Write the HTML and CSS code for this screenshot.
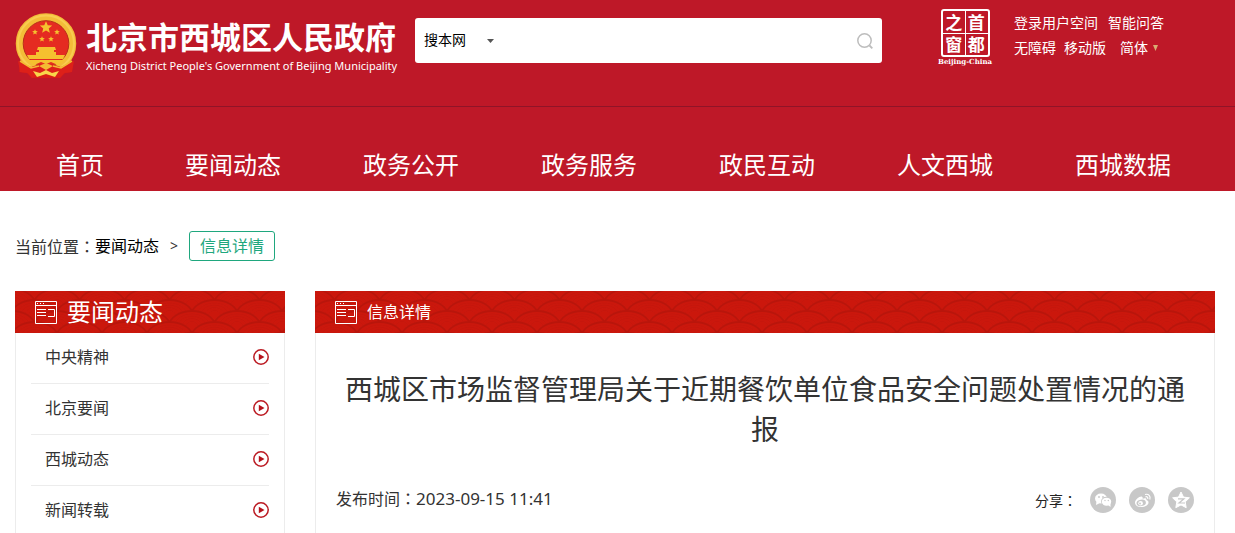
FILE: index.html
```html
<!DOCTYPE html>
<html lang="zh-CN">
<head>
<meta charset="utf-8">
<title>西城区市场监督管理局关于近期餐饮单位食品安全问题处置情况的通报</title>
<link rel="stylesheet" href="styles.css">
</head>
<body>
<svg class="defs" width="0" height="0" aria-hidden="true">
  <symbol id="play" viewBox="0 0 16 16"><circle cx="8" cy="8" r="7.2" fill="none" stroke="#bb1a22" stroke-width="1.5"/><path d="M5.8 4.7v6.6l5.7-3.3z" fill="#b5121b"/></symbol>
  <symbol id="panel" viewBox="0 0 22 23"><path d="M.5.5h21v22H.5zM.5 4.5h21M2 8.500h9M2 11.500h9M2 14.500h9M13 8.500h6.500v7H13" fill="none" stroke="#fff"/><path d="M2 2h1v1H2zM5 2h1v1H5zM8 2h1v1H8z" fill="#fff"/></symbol>
  <symbol id="star" viewBox="-10 -10 20 20"><path d="M0-9.500 2.700-3.300 9.500-2.900 4.200 1.500 6 8.200 0 4.600-6 8.200-4.200 1.500-9.500-2.900-2.700-3.300z"/></symbol>
</svg>
<header class="site-header">
  <div class="top">
    <a class="brand" href="#">
      <svg class="emblem" viewBox="0 0 62 66" aria-hidden="true">
        <path d="M7 45 4 59l8 1 5 5h28l5-5 7-1-3-14z" fill="#d81c17"/>
        <circle cx="31" cy="30.500" r="26.500" fill="#e52b21" stroke="#f3bd38" stroke-width="7.500"/>
        <circle cx="31" cy="30.500" r="28" fill="none" stroke="#f8cd50" stroke-width="2"/>
        <circle cx="31" cy="30.500" r="22.800" fill="none" stroke="#b92c19" stroke-width="1"/>
        <g fill="#f5c12f">
          <use href="#star" x="24.500" y="8" width="13" height="13"/>
          <use href="#star" x="17" y="16" width="6" height="6"/>
          <use href="#star" x="39" y="16" width="6" height="6"/>
          <use href="#star" x="24" y="23" width="6" height="6"/>
          <use href="#star" x="33" y="23" width="6" height="6"/>
          <path d="M23 34h17l1 3H22zM24 37h15v2H24zM21 39h20v3H21zM12 42h38l-2 4H14z"/>
          <path d="M12 47h38l-7 5-7-3-5 2-5-2-7 3z"/>
        </g>
        <path d="m3 48 13 6 9-3 6 3 6-3 9 3 13-6-2 11-8 1-4 5-8-3H25l-8 3-4-5-8-1z" fill="#dd2019"/>
        <path d="m18 58 7 2 6-3 6 3 7-2-4 6-9-3-9 3z" fill="#f8d64a"/>
        <path d="m24 53 7-3 7 3-7 4z" fill="#f4bb33"/>
        <path d="m5 48 11 7 8-2M57 48l-11 7-8-2" fill="none" stroke="#f4bb33" stroke-width="1.500"/>
      </svg>
      <span class="brand-text">
        <span class="brand-name">北京市西城区人民政府</span>
        <span class="brand-en">Xicheng District People's Government of Beijing Municipality</span>
      </span>
    </a>
    <form class="search" onsubmit="return false">
      <select class="scope" aria-label="搜索范围"><option>搜本网</option></select>
      <svg class="caret" viewBox="0 0 7 4" aria-hidden="true"><path d="M0 0h7L3.500 4z" fill="#555"/></svg>
      <input class="query" type="text" aria-label="搜索">
      <button class="search-btn" aria-label="搜索"><svg viewBox="0 0 16 16"><path d="M12.500 12.500 15.300 15.300" stroke="#bdbdbd" stroke-width="1.800"/><circle cx="7.500" cy="7.500" r="6.700" fill="none" stroke="#bdbdbd" stroke-width="1.500"/></svg></button>
    </form>
    <div class="tools">
      <a class="seal" href="#">
        <span class="seal-box"><span>之</span><span>首</span><span>窗</span><span>都</span></span>
        <span class="seal-en">Beijing-China</span>
      </a>
      <div class="links">
        <div class="links-row user"><a href="#">登录用户空间</a><a href="#">智能问答</a></div>
        <div class="links-row"><a href="#">无障碍</a><a href="#">移动版</a><a class="lang" href="#">简体<svg viewBox="0 0 5 6" aria-hidden="true"><path d="M0 0h5L2.500 6z" fill="#d9ad72"/></svg></a></div>
      </div>
    </div>
  </div>
  <nav class="nav">
    <a href="#">首页</a><a href="#">要闻动态</a><a href="#">政务公开</a><a href="#">政务服务</a><a href="#">政民互动</a><a href="#">人文西城</a><a href="#">西城数据</a>
  </nav>
</header>
<div class="crumbs">
  <span>当前位置<span class="colon" lang="zh-TW">：</span></span><a href="#">要闻动态</a><span class="sep">&gt;</span><a class="current" href="#">信息详情</a>
</div>
<div class="layout">
  <aside class="side">
    <h2 class="bar bar-large"><svg aria-hidden="true"><use href="#panel"/></svg>要闻动态</h2>
    <ul class="menu">
      <li><a href="#">中央精神<svg aria-hidden="true"><use href="#play"/></svg></a></li>
      <li><a href="#">北京要闻<svg aria-hidden="true"><use href="#play"/></svg></a></li>
      <li><a href="#">西城动态<svg aria-hidden="true"><use href="#play"/></svg></a></li>
      <li><a href="#">新闻转载<svg aria-hidden="true"><use href="#play"/></svg></a></li>
    </ul>
  </aside>
  <main class="content">
    <h2 class="bar"><svg aria-hidden="true"><use href="#panel"/></svg>信息详情</h2>
    <article class="article">
      <h1>西城区市场监督管理局关于近期餐饮单位食品安全问题处置情况的通报</h1>
      <div class="meta">
        <span class="date">发布时间<span class="colon" lang="zh-TW">：</span><time datetime="2023-09-15T11:41">2023-09-15 11:41</time></span>
        <div class="share">
          <span>分享<span class="colon" lang="zh-TW">：</span></span>
          <a href="#" aria-label="微信"><svg viewBox="0 0 26 26"><circle cx="13" cy="13" r="13" fill="#c8c8c8"/><g fill="#fff"><ellipse cx="11" cy="11.500" rx="6" ry="5"/><path d="m6.500 14-.5 4 4-2z"/></g><ellipse cx="16.500" cy="14.500" rx="5.400" ry="4.800" fill="#c8c8c8"/><ellipse cx="16.500" cy="14.700" rx="4.700" ry="4" fill="#fff"/><path d="m18 18 2.500 2v-4z" fill="#fff"/><g fill="#c8c8c8"><circle cx="9" cy="10" r=".9"/><circle cx="13" cy="10" r=".9"/><circle cx="15" cy="13.500" r=".7"/><circle cx="18.300" cy="13.500" r=".7"/></g></svg></a>
          <a href="#" aria-label="微博"><svg viewBox="0 0 26 26"><circle cx="13" cy="13" r="13" fill="#c8c8c8"/><path d="M6 15.500c0-3 5-6.800 7-5.800 1 .5.700 1.600.6 2 1.800-.7 4-.8 3.900 1.200 1.200.4 2 1.200 2 2.500 0 2.500-3.400 4.700-7 4.700S6 18.500 6 15.500z" fill="#fff"/><ellipse cx="12.200" cy="15.900" rx="4.700" ry="3.200" fill="#c8c8c8" transform="rotate(-8 12.200 15.900)"/><circle cx="11.600" cy="16.200" r="2.300" fill="#fff"/><circle cx="11" cy="16.500" r=".9" fill="#c8c8c8"/><path d="M16 7.500c3.500-1 6 1.800 4.800 5M16.500 9.800c1.700-.4 2.700.6 2.200 2.200" fill="none" stroke="#fff" stroke-width="1.200"/></svg></a>
          <a href="#" aria-label="QQ空间"><svg viewBox="0 0 26 26"><circle cx="13" cy="13" r="13" fill="#c8c8c8"/><path d="m13 5 2.500 5.100 5.900.7-4.200 4.100 1 5.800-5.200-2.800-5.200 2.800 1-5.800-4.200-4.100 5.900-.7z" fill="#fff" stroke="#fff" stroke-linejoin="round"/><path d="M10 11.800h6l-5 4.200h6" fill="none" stroke="#c8c8c8" stroke-width="1.200"/></svg></a>
        </div>
      </div>
    </article>
  </main>
</div>
</body>
</html>
```
FILE: styles.css
```css
* { box-sizing: border-box; }
body {
  margin: 0;
  background: #fff;
  color: #333;
  font: 16px/24px "Noto Sans", "Noto Sans CJK SC", sans-serif;
}
a { color: inherit; text-decoration: none; }
h1, h2, ul { margin: 0; padding: 0; font-weight: 400; list-style: none; }
svg { display: block; flex: none; }
.defs { position: absolute; }
.colon { font-family: "Noto Sans CJK TC", sans-serif; }

.site-header { background: #be1828; color: #fff; }
.top {
  display: flex;
  align-items: flex-start;
  height: 107px;
  padding: 0 15px;
  border-bottom: 1px solid #8f1428;
}
.brand { display: flex; gap: 9px; width: 400px; padding-top: 13px; }
.emblem { width: 62px; height: 66px; }
.brand-text { display: flex; flex-direction: column; padding-top: 3px; white-space: nowrap; }
.brand-name { font: 700 31px/40px "Noto Sans CJK SC", sans-serif; }
.brand-en { font-size: 11px; line-height: 20px; }

.search {
  display: flex;
  flex: 1;
  align-items: center;
  min-width: 200px;
  height: 45px;
  margin-top: 18px;
  padding: 0 9px;
  border-radius: 3px;
  background: #fff;
}
.scope {
  width: 63px;
  height: 28px;
  padding: 0 0 4px;
  border: 0;
  appearance: none;
  background: none;
  color: #000;
  font: 14px/24px "Noto Sans CJK SC", sans-serif;
}
.caret { width: 7px; height: 4px; }
.query { flex: 1; min-width: 0; height: 40px; border: 0; outline: 0; background: none; font: inherit; }
.search-btn { padding: 0; border: 0; background: none; }
.search-btn svg { width: 16px; height: 16px; }

.tools { display: flex; gap: 21px; width: 338px; padding: 9px 0 0 55px; font-size: 14px; }
.seal { display: flex; flex-direction: column; align-items: center; width: 56px; }
.seal-box {
  display: grid;
  grid-template-columns: 1fr 1fr;
  width: 49px;
  height: 48px;
  border: 2px solid #fff;
  border-radius: 3px;
  background:
    linear-gradient(#fff, #fff) center / 1px 100% no-repeat,
    linear-gradient(#fff, #fff) center / 100% 1px no-repeat;
  font: 700 17px/22px "Noto Sans CJK SC", sans-serif;
  text-align: center;
}
.seal-en { font: 700 7px/10px "DejaVu Serif", serif; white-space: nowrap; }
.links { padding-top: 1px; white-space: nowrap; }
.links-row { display: flex; gap: 8px; line-height: 25px; }
.user { gap: 10px; }
.lang { display: flex; align-items: center; gap: 5px; padding-left: 6px; }
.lang svg { width: 5px; height: 6px; }

.nav {
  display: grid;
  grid-template-columns: 128fr repeat(6, 178fr);
  padding: 40px 23px 8px 16px;
  font-size: 24px;
  line-height: 36px;
  text-align: center;
}

.crumbs { display: flex; align-items: center; padding: 40px 15px 30px; }
.crumbs a { color: #000; }
.sep { padding: 0 11px; font-size: 14px; }
.crumbs .current {
  padding: 2px 10px;
  border: 1px solid #1fa77e;
  border-radius: 3px;
  color: #1fa77e;
}

.layout { display: flex; gap: 30px; padding: 0 20px 0 15px; }
.side { width: 270px; flex: none; }
.content { display: flex; flex: 1; flex-direction: column; min-width: 0; }
.bar {
  display: flex;
  align-items: center;
  gap: 10px;
  height: 42px;
  padding: 0 20px;
  color: #fff;
  font-size: 16px;
  background: #cb170c url("data:image/svg+xml,%3Csvg xmlns='http://www.w3.org/2000/svg' xmlns:xlink='http://www.w3.org/1999/xlink' width='45' height='22'%3E%3Cdefs%3E%3Cg id='s' fill='%23cb170c' stroke='%23c3160c'%3E%3Cpath d='M-24 16C-19-4 19-4 24 16' stroke='%23b9150b' stroke-width='2'/%3E%3Cpath d='M-18 16C-15 0 15 0 18 16M-14 16C-12 3 12 3 14 16M-10 16C-8 6 8 6 10 16M-6 16C-5 10 5 10 6 16' stroke-width='.7'/%3E%3C/g%3E%3C/defs%3E%3Cuse xlink:href='%23s' x='0' y='-11'/%3E%3Cuse xlink:href='%23s' x='45' y='-11'/%3E%3Cuse xlink:href='%23s' x='22.5' y='0'/%3E%3Cuse xlink:href='%23s' x='0' y='11'/%3E%3Cuse xlink:href='%23s' x='45' y='11'/%3E%3C/svg%3E") -3px 8px;
}
.bar svg { width: 22px; height: 23px; }
.bar-large { font-size: 24px; }
.menu { padding: 0 15px; border: solid #ececec; border-width: 0 1px; }
.menu a {
  display: flex;
  align-items: center;
  justify-content: space-between;
  padding: 12px 0 14px 14px;
  border-bottom: 1px solid #ececec;
}
.menu li:last-child a { padding-bottom: 11px; border-bottom: 0; }
.menu svg { width: 16px; height: 16px; }

.article { flex: 1; padding: 36px 20px 0; border: solid #ececec; border-width: 0 1px; }
.article h1 { font-size: 28px; line-height: 40px; text-align: center; }
.meta { display: flex; justify-content: space-between; padding-top: 37px; }
.date time { font-size: 17px; }
.share { display: flex; align-items: center; gap: 13px; height: 28px; color: #222; font-size: 14px; }
.share svg { width: 26px; height: 26px; }
```
